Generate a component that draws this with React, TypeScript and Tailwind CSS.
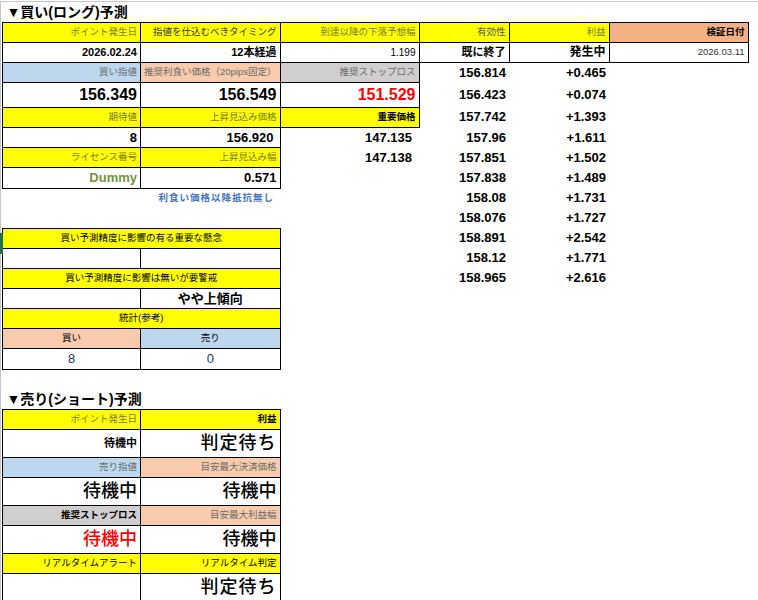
import { ReactNode } from 'react';
import clsx from 'clsx';
import { twMerge } from 'tailwind-merge';

type CellProps = {
    children?: ReactNode;
    b?: boolean;
    span?: number;
    className?: string;
};

// one spreadsheet cell, right aligned unless told otherwise
const Cell = ({ children, b = true, span, className }: CellProps) => (
    <td
        colSpan={span}
        className={twMerge(
            'h-[20px] p-0 pr-[3px] pl-[3px] whitespace-nowrap overflow-hidden leading-none text-right',
            b && 'border border-black',
            className
        )}
    >
        {children}
    </td>
);

const olive = 'bg-[#ffff00] text-[9.5px] text-[#7a7a2e]';
const yellowDark = 'bg-[#ffff00] text-[9.5px] text-[#333333]';
const yellowBlack = 'bg-[#ffff00] text-[9.5px] text-black';
const mid = 'text-[13px] font-bold text-black';
const big = 'text-[16px] font-bold text-black';
const wait = 'text-[18px] font-medium text-black';

// right hand columns (D, E) that sit outside the borders
const Side = ({ d, e }: { d?: string; e?: string }) => (
    <>
        <Cell b={false} className={mid}>{d}</Cell>
        <Cell b={false} className={mid}>{e}</Cell>
        <Cell b={false} />
    </>
);

export default function App() {
    return (
        <div className="relative h-[600px] w-[758px] overflow-hidden bg-white font-['Liberation_Sans','Noto_Sans_CJK_JP',sans-serif]">
            <div className="h-[2px] border-b border-[#c6c6c6]" />
            <div className="flex">
                <div className="w-[1px] self-stretch bg-[#c6c6c6] h-[598px]" />
                <table className="table-fixed border-collapse ml-[1px]">
                    <colgroup>
                        <col className="w-[138px]" />
                        <col className="w-[138px]" />
                        <col className="w-[139px]" />
                        <col className="w-[90px]" />
                        <col className="w-[100px]" />
                        <col className="w-[139px]" />
                    </colgroup>
                    <tbody>
                        <tr>
                            <td colSpan={6} className="h-[20px] p-0 pl-[4px] text-left text-[14px] font-bold leading-none text-black">
                                ▼買い(ロング)予測
                            </td>
                        </tr>
                        <tr>
                            <Cell className={olive}>ポイント発生日</Cell>
                            <Cell className={yellowDark}>指値を仕込むべきタイミング</Cell>
                            <Cell className={olive}>到達以降の下落予想幅</Cell>
                            <Cell className="bg-[#ffff00] text-[9.5px] text-[#555555]">有効性</Cell>
                            <Cell className={olive}>利益</Cell>
                            <Cell className="bg-[#f4b183] text-[9.5px] font-bold text-black">検証日付</Cell>
                        </tr>
                        <tr>
                            <Cell className="text-[11px] font-bold text-black">2026.02.24</Cell>
                            <Cell className="text-[11px] font-bold text-black">12本経過</Cell>
                            <Cell className="text-[10px] text-black">1.199</Cell>
                            <Cell className="text-[11px] font-bold text-black">既に終了</Cell>
                            <Cell className="text-[12px] font-bold text-black">発生中</Cell>
                            <Cell className="text-[9.5px] text-[#333333]">2026.03.11</Cell>
                        </tr>
                        <tr>
                            <Cell className="bg-[#bdd7ee] text-[9.5px] text-[#6b6b6b]">買い指値</Cell>
                            <Cell className="bg-[#f8cbad] text-[9.5px] text-[#6b6b6b]">推奨利食い価格（20pips固定）</Cell>
                            <Cell className="bg-[#d0cece] text-[9.5px] text-[#6b6b6b]">推奨ストップロス</Cell>
                            <Side d="156.814" e="+0.465" />
                        </tr>
                        <tr>
                            <Cell className={big}>156.349</Cell>
                            <Cell className={big}>156.549</Cell>
                            <Cell className="text-[16px] font-bold text-[#ff0000]">151.529</Cell>
                            <Side d="156.423" e="+0.074" />
                        </tr>
                        <tr>
                            <Cell className={olive}>期待値</Cell>
                            <Cell className={olive}>上昇見込み価格</Cell>
                            <Cell className="bg-[#ffff00] text-[9.5px] font-bold text-black">重要価格</Cell>
                            <Side d="157.742" e="+1.393" />
                        </tr>
                        <tr>
                            <Cell className={mid}>8</Cell>
                            <Cell className={clsx(mid, 'pr-[6px]')}>156.920</Cell>
                            <Cell b={false} className={clsx(mid, 'pr-[7px]')}>147.135</Cell>
                            <Side d="157.96" e="+1.611" />
                        </tr>
                        <tr>
                            <Cell className={olive}>ライセンス番号</Cell>
                            <Cell className={olive}>上昇見込み幅</Cell>
                            <Cell b={false} className={clsx(mid, 'pr-[7px]')}>147.138</Cell>
                            <Side d="157.851" e="+1.502" />
                        </tr>
                        <tr>
                            <Cell className="text-[13px] font-bold text-[#76923c]">Dummy</Cell>
                            <Cell className={mid}>0.571</Cell>
                            <Cell b={false} />
                            <Side d="157.838" e="+1.489" />
                        </tr>
                        <tr>
                            <Cell b={false} span={2} className="pr-[6px] text-[9.5px] font-bold tracking-[1px] text-[#4472c4]">
                                利食い価格以降抵抗無し
                            </Cell>
                            <Cell b={false} />
                            <Side d="158.08" e="+1.731" />
                        </tr>
                        <tr>
                            <Cell b={false} />
                            <Cell b={false} />
                            <Cell b={false} />
                            <Side d="158.076" e="+1.727" />
                        </tr>
                        <tr>
                            <Cell span={2} className={clsx(yellowBlack, 'text-center')}>買い予測精度に影響の有る重要な懸念</Cell>
                            <Cell b={false} />
                            <Side d="158.891" e="+2.542" />
                        </tr>
                        <tr>
                            <Cell />
                            <Cell />
                            <Cell b={false} />
                            <Side d="158.12" e="+1.771" />
                        </tr>
                        <tr>
                            <Cell span={2} className={clsx(yellowBlack, 'text-center')}>買い予測精度に影響は無いが要警戒</Cell>
                            <Cell b={false} />
                            <Side d="158.965" e="+2.616" />
                        </tr>
                        <tr>
                            <Cell />
                            <Cell className="text-center text-[13px] font-bold text-black">やや上傾向</Cell>
                            <Cell b={false} span={4} />
                        </tr>
                        <tr>
                            <Cell span={2} className={clsx(yellowBlack, 'text-center')}>統計(参考)</Cell>
                            <Cell b={false} span={4} />
                        </tr>
                        <tr>
                            <Cell className="bg-[#f8cbad] text-center text-[9.5px] text-black">買い</Cell>
                            <Cell className="bg-[#bdd7ee] text-center text-[9.5px] text-black">売り</Cell>
                            <Cell b={false} span={4} />
                        </tr>
                        <tr>
                            <Cell className="text-center text-[13px] text-[#1f3864]">8</Cell>
                            <Cell className="text-center text-[13px] text-[#1f3864]">0</Cell>
                            <Cell b={false} span={4} />
                        </tr>
                        <tr>
                            <Cell b={false} span={6} />
                        </tr>
                        <tr>
                            <td colSpan={6} className="h-[20px] p-0 pl-[4px] text-left text-[14px] font-bold leading-none text-black">
                                ▼売り(ショート)予測
                            </td>
                        </tr>
                        <tr>
                            <Cell className={olive}>ポイント発生日</Cell>
                            <Cell className="bg-[#ffff00] text-[9.5px] font-bold text-black">利益</Cell>
                            <Cell b={false} span={4} />
                        </tr>
                        <tr>
                            <Cell className="text-[11px] font-bold text-black">待機中</Cell>
                            <Cell className={clsx(wait, 'tracking-[1px]')}>判定待ち</Cell>
                            <Cell b={false} span={4} />
                        </tr>
                        <tr>
                            <Cell className="bg-[#bdd7ee] text-[9.5px] text-[#6b6b6b]">売り指値</Cell>
                            <Cell className="bg-[#f8cbad] text-[9.5px] text-[#6b6b6b]">目安最大決済価格</Cell>
                            <Cell b={false} span={4} />
                        </tr>
                        <tr>
                            <Cell className={wait}>待機中</Cell>
                            <Cell className={wait}>待機中</Cell>
                            <Cell b={false} span={4} />
                        </tr>
                        <tr>
                            <Cell className="bg-[#d0cece] text-[9.5px] font-bold text-black">推奨ストップロス</Cell>
                            <Cell className="bg-[#f8cbad] text-[9.5px] text-[#6b6b6b]">目安最大利益幅</Cell>
                            <Cell b={false} span={4} />
                        </tr>
                        <tr>
                            <Cell className="text-[18px] font-medium text-[#ff0000]">待機中</Cell>
                            <Cell className={wait}>待機中</Cell>
                            <Cell b={false} span={4} />
                        </tr>
                        <tr>
                            <Cell className={yellowBlack}>リアルタイムアラート</Cell>
                            <Cell className={yellowBlack}>リアルタイム判定</Cell>
                            <Cell b={false} span={4} />
                        </tr>
                        <tr>
                            <Cell />
                            <Cell className={clsx(wait, 'tracking-[1px]')}>判定待ち</Cell>
                            <Cell b={false} span={4} />
                        </tr>
                    </tbody>
                </table>
            </div>
            {/* selected row marker from the sheet */}
            <div className="absolute left-0 top-[233px] h-[21px] w-[3px] bg-[#217346]" />
        </div>
    );
}
